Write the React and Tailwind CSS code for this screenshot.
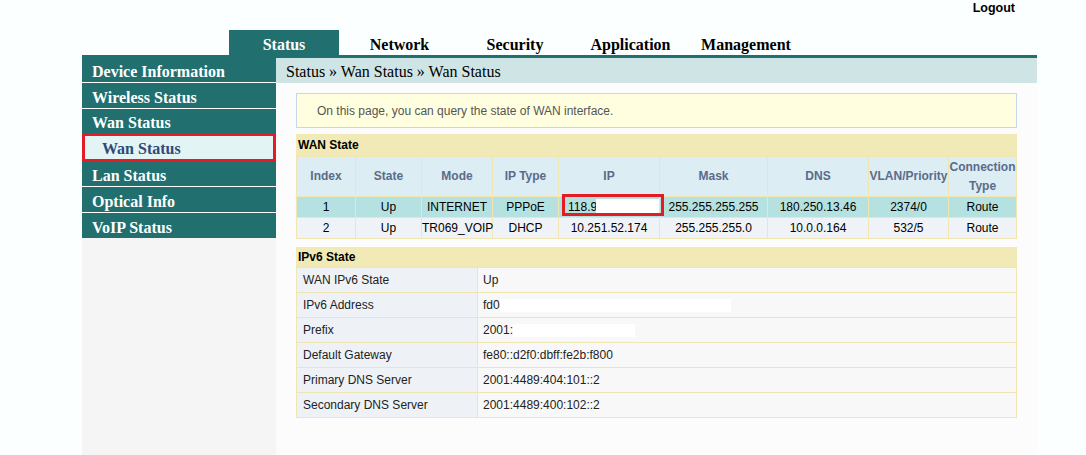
import React from 'react';

const serif = { fontFamily: '"Liberation Serif", "Times New Roman", serif' };

const tabs = ['Status', 'Network', 'Security', 'Application', 'Management'];

const wanCols = [
  { label: 'Index', w: 59 },
  { label: 'State', w: 66 },
  { label: 'Mode', w: 71 },
  { label: 'IP Type', w: 66 },
  { label: 'IP', w: 101 },
  { label: 'Mask', w: 108 },
  { label: 'DNS', w: 101 },
  { label: 'VLAN/Priority', w: 80 },
  { label: 'Connection Type', w: 68 },
];

const wanRows = [
  ['1', 'Up', 'INTERNET', 'PPPoE', null, '255.255.255.255', '180.250.13.46', '2374/0', 'Route'],
  ['2', 'Up', 'TR069_VOIP', 'DHCP', '10.251.52.174', '255.255.255.0', '10.0.0.164', '532/5', 'Route'],
];

function SideItem({ children, className = '' }) {
  return (
    <div className={`flex items-center pl-[10px] pt-[4px] bg-[#216f6f] text-white font-bold text-[16px] ${className}`} style={serif}>
      {children}
    </div>
  );
}

export default function App() {
  return (
    <div className="min-h-screen bg-[#fbffff] text-black" style={{ fontFamily: '"Liberation Sans", Arial, sans-serif' }}>
      <div className="w-[955px] ml-[82px]">
        {/* Top */}
        <div className="h-[30px] flex justify-end pr-[22px]">
          <span className="font-bold text-[12.5px] leading-[16px]">Logout</span>
        </div>

        {/* Tabs */}
        <div className="h-[25px] flex pl-[147px] gap-[5.5px]">
          {tabs.map((t, i) => (
            <div
              key={t}
              className={`w-[110px] flex items-end justify-center font-bold text-[16px] leading-[20px] ${
                i === 0 ? 'bg-[#216f6f] text-white' : 'text-black'
              }`}
              style={serif}
            >
              {t}
            </div>
          ))}
        </div>

        {/* Main */}
        <div className="flex border-t-[3px] border-[#216f6f] min-h-[400px]">
          {/* Sidebar */}
          <div className="w-[195px] bg-[#f5f5f5] self-stretch">
            <SideItem className="h-[25px] border-b border-white">Device Information</SideItem>
            <SideItem className="h-[26px] border-b border-white">Wireless Status</SideItem>
            <SideItem className="h-[24px]">Wan Status</SideItem>
            <div
              className="h-[29px] border-[3px] border-[#e31d25] bg-[#e3f4f4] flex items-center pl-[17px] pt-[2px] text-[#2e4a7a] font-bold text-[16px]"
              style={serif}
            >
              Wan Status
            </div>
            <SideItem className="h-[25px] border-b border-white">Lan Status</SideItem>
            <SideItem className="h-[26px] border-b border-white">Optical Info</SideItem>
            <SideItem className="h-[25px]">VoIP Status</SideItem>
          </div>

          {/* Content */}
          <div className="flex-1 bg-[#fdfcfc]">
            <div className="h-[25px] bg-[#cfe5e5] pl-[10px] pt-[2px] flex items-center text-[16px]" style={serif}>
              Status » Wan Status » Wan Status
            </div>

            <div className="px-[20px] pt-[10px]">
              <div className="h-[35px] border border-[#c3d8ea] bg-[#ffffe0] pl-[20px] flex items-center text-[12px] text-[#555]">
                On this page, you can query the state of WAN interface.
              </div>

              {/* WAN State */}
              <div className="mt-[6px] h-[22px] bg-[#f2eab6] pl-[2px] flex items-center font-bold text-[12px]">
                WAN State
              </div>
              <table className="w-[720px] table-fixed border-collapse text-[12px] text-center">
                <colgroup>
                  {wanCols.map((c) => (
                    <col key={c.label} style={{ width: c.w }} />
                  ))}
                </colgroup>
                <thead>
                  <tr className="h-[40px] bg-[#dcedf3]">
                    {wanCols.map((c) => (
                      <th key={c.label} className="border border-[#efe6b4] font-bold text-[#5a6b8b] leading-[19px] px-0">
                        {c.label}
                      </th>
                    ))}
                  </tr>
                </thead>
                <tbody>
                  {wanRows.map((r, ri) => (
                    <tr key={ri} className={`h-[21px] ${ri === 0 ? 'bg-[#b5e2e1]' : 'bg-[#eff2f6]'}`}>
                      {r.map((v, ci) =>
                        v === null ? (
                          <td key={ci} className="border border-[#efe6b4] relative text-left pl-[9px]">
                            <span>118.9</span>
                            <span className="absolute left-[37px] top-[2px] w-[63px] h-[14px] bg-white"></span>
                            <span className="absolute left-[3px] top-[-3px] w-[102px] h-[22px] border-[3px] border-[#e31d25]"></span>
                          </td>
                        ) : (
                          <td key={ci} className="border border-[#efe6b4] whitespace-nowrap px-0">
                            {v}
                          </td>
                        )
                      )}
                    </tr>
                  ))}
                </tbody>
              </table>

              {/* IPv6 State */}
              <div className="mt-[8px] h-[20px] bg-[#f2eab6] pl-[2px] flex items-center font-bold text-[12px]">
                IPv6 State
              </div>
              <table className="w-[720px] table-fixed border-collapse text-[12px] text-[#222]">
                <colgroup>
                  <col style={{ width: 181 }} />
                  <col style={{ width: 539 }} />
                </colgroup>
                <tbody>
                  <tr className="h-[25px]">
                    <td className="border border-[#efe6b4] bg-[#eef2f7] pl-[6px]">WAN IPv6 State</td>
                    <td className="border border-[#efe6b4] bg-[#f8f8f8] pl-[5px]">Up</td>
                  </tr>
                  <tr className="h-[25px]">
                    <td className="border border-[#efe6b4] bg-[#eef2f7] pl-[6px]">IPv6 Address</td>
                    <td className="border border-[#efe6b4] bg-[#f8f8f8] pl-[5px]">
                      fd0<span className="inline-block align-middle w-[231px] h-[13px] bg-white"></span>
                    </td>
                  </tr>
                  <tr className="h-[25px]">
                    <td className="border border-[#efe6b4] bg-[#eef2f7] pl-[6px]">Prefix</td>
                    <td className="border border-[#efe6b4] bg-[#f8f8f8] pl-[5px]">
                      2001:<span className="inline-block align-middle w-[122px] h-[13px] bg-white"></span>
                    </td>
                  </tr>
                  <tr className="h-[25px]">
                    <td className="border border-[#efe6b4] bg-[#eef2f7] pl-[6px]">Default Gateway</td>
                    <td className="border border-[#efe6b4] bg-[#f8f8f8] pl-[5px]">fe80::d2f0:dbff:fe2b:f800</td>
                  </tr>
                  <tr className="h-[25px]">
                    <td className="border border-[#efe6b4] bg-[#eef2f7] pl-[6px]">Primary DNS Server</td>
                    <td className="border border-[#efe6b4] bg-[#f8f8f8] pl-[5px]">2001:4489:404:101::2</td>
                  </tr>
                  <tr className="h-[25px]">
                    <td className="border border-[#efe6b4] bg-[#eef2f7] pl-[6px]">Secondary DNS Server</td>
                    <td className="border border-[#efe6b4] bg-[#f8f8f8] pl-[5px]">2001:4489:400:102::2</td>
                  </tr>
                </tbody>
              </table>
            </div>
          </div>
        </div>
      </div>
    </div>
  );
}
